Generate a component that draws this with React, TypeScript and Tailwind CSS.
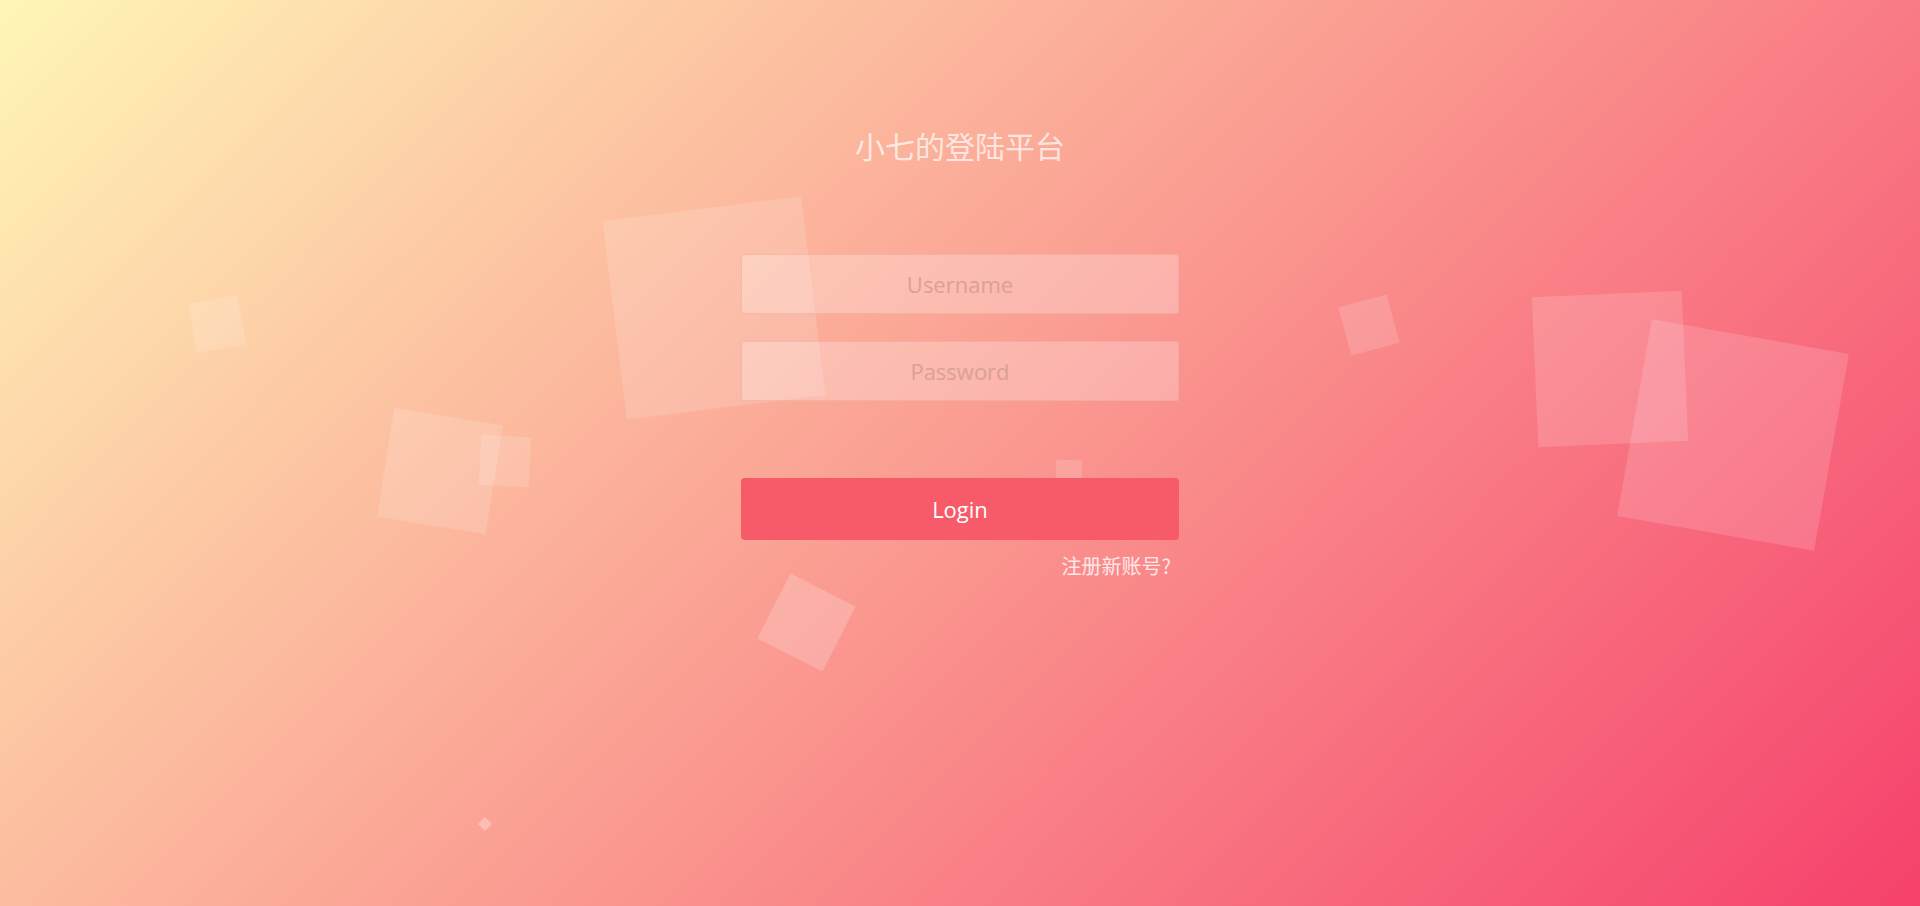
import React from "react";

const squares = [
  "left-[614px] top-[208px] w-[200px] h-[200px] rotate-[-7deg] bg-white/15",
  "left-[192px] top-[299px] w-[50px] h-[50px] rotate-[-10deg] bg-white/15",
  "left-[385px] top-[416px] w-[110px] h-[110px] rotate-[9deg] bg-white/15",
  "left-[480px] top-[436px] w-[50px] h-[50px] rotate-[3deg] bg-white/15",
  "left-[1056px] top-[460px] w-[26px] h-[26px] rotate-[1deg] bg-white/15",
  "left-[770px] top-[586px] w-[73px] h-[73px] rotate-[27deg] bg-white/20",
  "left-[480px] top-[819px] w-[10px] h-[10px] rotate-[45deg] bg-white/30",
  "left-[1344px] top-[300px] w-[50px] h-[50px] rotate-[-15deg] bg-white/15",
  "left-[1535px] top-[294px] w-[150px] h-[150px] rotate-[-2.5deg] bg-white/15",
  "left-[1633px] top-[335px] w-[200px] h-[200px] rotate-[10deg] bg-white/15",
];

function Field(props: { placeholder: string; type: string; className?: string }) {
  return (
    <input
      type={props.type}
      placeholder={props.placeholder}
      className={
        "w-full h-[60px] rounded-[3px] border border-[#e9a394]/50 bg-white/25 text-center text-[22px] text-white placeholder:text-[#d9a193] outline-none font-['Open_Sans',sans-serif] " +
        (props.className || "")
      }
    />
  );
}

export default function App(): JSX.Element {
  return (
    <div className="relative w-full h-[906px] overflow-hidden bg-[linear-gradient(135deg,#fff6b7_0%,#f6416c_100%)]">
      {squares.map((cls, i) => (
        <div key={i} className={"absolute " + cls} />
      ))}

      <div className="relative flex flex-col items-center pt-[130px]">
        <h1 className="h-[30px] text-[30px] leading-[30px] text-white/70 font-['Noto_Sans_CJK_SC',sans-serif]">
          小七的登陆平台
        </h1>

        <form className="w-[438px] mt-[94px] flex flex-col" onSubmit={(e) => e.preventDefault()}>
          <Field type="text" placeholder="Username" />
          <Field type="password" placeholder="Password" className="mt-[27px]" />
          <button
            type="submit"
            className="mt-[77px] h-[62px] w-full rounded-[4px] bg-[#f75b6a] text-white text-[22px] font-['Open_Sans',sans-serif]"
          >
            Login
          </button>
          <div className="flex justify-end pr-[8px] mt-[16px]">
            <a className="text-[20px] leading-[20px] text-white/80 font-['Noto_Sans_CJK_SC',sans-serif] cursor-pointer">
              注册新账号?
            </a>
          </div>
        </form>
      </div>
    </div>
  );
}
